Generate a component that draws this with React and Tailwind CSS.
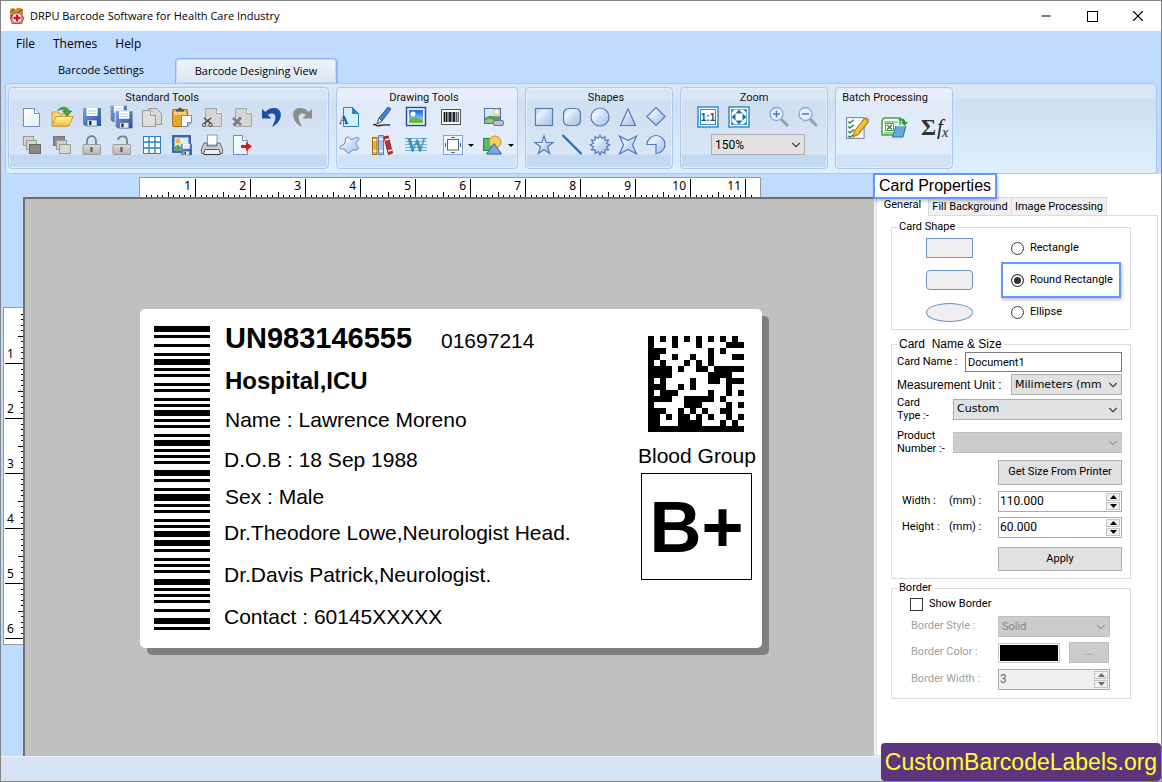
import { Minus, X, ChevronDown } from 'lucide-react';

const BARS = [
  [0, 6], [9, 3], [18, 3], [27, 3], [33, 6], [42, 3], [48, 3], [57, 3], [63, 3], [72, 3],
  [78, 3], [84, 6], [93, 3], [99, 3], [108, 3], [114, 6], [123, 3], [129, 3], [135, 3], [144, 6],
  [153, 3], [162, 3], [168, 7], [178, 3], [184, 3], [193, 3], [199, 3], [205, 6], [214, 6], [223, 3],
  [232, 3], [238, 3], [244, 3], [253, 6], [262, 3], [268, 3], [274, 3], [283, 3], [292, 6], [301, 3],
];

const MATRIX = [
  '1010101010101010',
  '1000100010000111',
  '1110000000101000',
  '1100100100100011',
  '1010001010100000',
  '1111010011011111',
  '1111000000111100',
  '1010000100110111',
  '1110010100000100',
  '1011100000100101',
  '1111001111101000',
  '1000001110000101',
  '1110010101001100',
  '1101011010100101',
  '1100011110001010',
  '1111111111111111',
];

function Icon({ size = 22, children }) {
  return (
    <svg width={size} height={size} viewBox="0 0 22 22" fill="none" aria-hidden="true" className="shrink-0">
      {children}
    </svg>
  );
}

function Gradients() {
  return (
    <svg width="0" height="0" className="absolute" aria-hidden="true">
      <defs>
        <linearGradient id="shape" x1="0" y1="0" x2="1" y2="1">
          <stop offset="0" stopColor="#b9cff0" />
          <stop offset="0.3" stopColor="#eaf2fc" />
          <stop offset="0.55" stopColor="#c6daf3" />
          <stop offset="1" stopColor="#a9c6ec" />
        </linearGradient>
        <linearGradient id="sheet" x1="0" y1="0" x2="1" y2="1">
          <stop offset="0" stopColor="#ffffff" />
          <stop offset="1" stopColor="#e3eefb" />
        </linearGradient>
        <linearGradient id="grey" x1="0" y1="0" x2="0" y2="1">
          <stop offset="0" stopColor="#dcdcdc" />
          <stop offset="1" stopColor="#b4b4b4" />
        </linearGradient>
        <linearGradient id="folder" x1="0" y1="0" x2="0" y2="1">
          <stop offset="0" stopColor="#fff3ae" />
          <stop offset="1" stopColor="#efbf3f" />
        </linearGradient>
        <linearGradient id="floppy" x1="0" y1="0" x2="1" y2="1">
          <stop offset="0" stopColor="#7fa3dc" />
          <stop offset="1" stopColor="#24509c" />
        </linearGradient>
        <linearGradient id="sky" x1="0" y1="0" x2="0" y2="1">
          <stop offset="0" stopColor="#1268e0" />
          <stop offset="1" stopColor="#bfe6fb" />
        </linearGradient>
      </defs>
    </svg>
  );
}

function Page({ x = 0, fill = 'url(#sheet)', stroke = '#6d8fc2' }) {
  return (
    <g transform={`translate(${x} 0)`}>
      <path d="M2.5 2.5h11l5 5v13h-16z" fill={fill} stroke={stroke} />
      <path d="M13.5 2.5v5h5" fill="#f4f8fd" stroke={stroke} />
    </g>
  );
}

function Disk() {
  return (
    <>
      <path d="M2 2h18v18H4l-2-2z" fill="url(#floppy)" />
      <path d="M5.5 2h11v8h-11z" fill="#fff" />
      <path d="M7 5h8M7 7.5h8" stroke="#b9c7de" />
      <path d="M6 14h10v6H6z" fill="#e8ecf2" stroke="#3b5d97" strokeWidth="0.6" />
      <path d="M8 15h2.5v4H8z" fill="#333" />
    </>
  );
}

function NewIcon() {
  return <Icon><Page /></Icon>;
}

function OpenIcon() {
  return (
    <Icon>
      <path d="M1 6h6l2 2h8v12H1z" fill="#f7d675" stroke="#c99a2c" />
      <path d="M1 20l4-9.5h17L18 20z" fill="url(#folder)" stroke="#c99a2c" />
      <path d="M7 4.5C10 0 16.5 0 18 5h2.7l-4.5 5-4.5-5h2.6C13 2.8 10 2.6 7 4.5z" fill="#3fae3a" stroke="#1f7a22" strokeWidth="0.7" />
    </Icon>
  );
}

function SaveIcon() {
  return <Icon><Disk /></Icon>;
}

function SaveAllIcon() {
  return (
    <Icon size={24}>
      <g transform="translate(-1 -1) scale(.82)"><Disk /></g>
      <g transform="translate(3.5 4) scale(.86)">
        <path d="M1 1h20v20H1z" fill="#d5e2f3" />
        <Disk />
      </g>
    </Icon>
  );
}

function CopyIcon() {
  return (
    <Icon>
      <path d="M7.5 2.5h8l5 5v11h-13z" fill="#d6d6d6" stroke="#979797" />
      <path d="M1.5 4.5h8l5 5v11h-13z" fill="#dedede" stroke="#979797" />
      <path d="M9.5 4.5v5h5" stroke="#979797" fill="#eee" />
    </Icon>
  );
}

function PasteIcon() {
  return (
    <Icon>
      <rect x="1.5" y="3.5" width="15" height="17" rx="1" fill="#e9a52f" stroke="#a86d10" />
      <path d="M3 6h12v3H3z" fill="#f7cf72" />
      <path d="M5 5.5V3.5h2C7.3.8 10.7.8 11 3.5h2v2z" fill="#555" />
      <path d="M10.5 9.5h10v7l-4 4h-6z" fill="#fff" stroke="#6d8fc2" />
      <path d="M20.5 16.5h-4v4z" fill="#a9c6ec" stroke="#6d8fc2" />
    </Icon>
  );
}

function CutIcon() {
  return (
    <Icon>
      <Page fill="#d5d5d5" stroke="#a5a5a5" x={2} />
      <path d="M3 12l7 5.5M10 12l-6.5 5.5" stroke="#444" strokeWidth="1.3" />
      <circle cx="3" cy="18.8" r="1.7" stroke="#444" />
      <circle cx="9.5" cy="18.8" r="1.7" stroke="#444" />
    </Icon>
  );
}

function DeleteIcon() {
  return (
    <Icon>
      <Page fill="#d5d5d5" stroke="#a5a5a5" x={2} />
      <path d="M2 12l8 7M10 11.5L2.5 19.5" stroke="#7d7d7d" strokeWidth="2.8" />
    </Icon>
  );
}

function UndoIcon() {
  return (
    <Icon>
      <path d="M1 3v9.5h9.5L7 9c5-3.5 9.5-.5 6.5 6.5-.8 1.8-1.5 3.5-2.5 5.5C22 15.5 22.5 3 14 2 10 1.6 7 3.2 4.5 6z" fill="#1f50a6" />
    </Icon>
  );
}

function RedoIcon() {
  return (
    <Icon>
      <path d="M21 3v9.5h-9.5L15 9c-5-3.5-9.5-.5-6.5 6.5.8 1.8 1.5 3.5 2.5 5.5C0 15.5-.5 3 8 2c4-.4 7 1.2 9.5 4z" fill="#8d8d8d" />
    </Icon>
  );
}

function FrontIcon() {
  return (
    <Icon>
      <rect x="2.5" y="2.5" width="10" height="9" fill="#d4d4d4" stroke="#9a9a9a" />
      <rect x="5.5" y="6.5" width="10" height="9" fill="#d4d4d4" stroke="#9a9a9a" />
      <rect x="8.5" y="10.5" width="11" height="9" fill="#8a8a8a" stroke="#666" />
    </Icon>
  );
}

function BackIcon() {
  return (
    <Icon>
      <rect x="2.5" y="2.5" width="11" height="9" fill="#8a8a8a" stroke="#777" />
      <rect x="5.5" y="6.5" width="10" height="9" fill="#cfcfcf" stroke="#9a9a9a" />
      <rect x="8.5" y="10.5" width="11" height="9" fill="#d8d8d8" stroke="#9a9a9a" />
    </Icon>
  );
}

function LockIcon({ open }) {
  return (
    <Icon>
      <path d={open ? 'M7 6c1-5 9-5 9 .5V11' : 'M6 11V7c0-6.5 9-6.5 9 0v4'} stroke="#7f7f7f" strokeWidth="1.8" />
      <rect x="2" y="10.5" width="17.5" height="10" rx="1" fill="url(#grey)" stroke="#9b9b9b" />
      <path d="M9.5 13h2v5h-2z" fill="#555" />
    </Icon>
  );
}

function GridIcon() {
  return (
    <Icon>
      <rect x="2.5" y="2.5" width="17" height="17" fill="#fff" stroke="#2b86c0" />
      <path d="M8 2v18M14 2v18M2 8h18M2 14h18" stroke="#2b86c0" strokeWidth="1.4" />
    </Icon>
  );
}

function ExportImageIcon() {
  return (
    <Icon>
      <rect x="1" y="1" width="19" height="18" fill="#3a66a8" />
      <rect x="3.5" y="3.5" width="14" height="13" fill="#dcefff" />
      <circle cx="7" cy="7" r="2.5" fill="#f5b62c" />
      <path d="M3.5 16.5v-4l4-2 5 6z" fill="#56a64a" />
      <g transform="translate(8.5 8.5) scale(.62)"><Disk /></g>
    </Icon>
  );
}

function PrintIcon() {
  return (
    <Icon>
      <path d="M6.5 1h9.5v10H6.5z" fill="#fff" stroke="#7a9ecb" />
      <path d="M3 9h3v3h10V9h3l2.5 6v4.5H.5V15z" fill="#c9ced6" stroke="#666c76" />
      <path d="M4 15.5h14l1.5 5h-17z" fill="#eef1f5" stroke="#555" />
      <path d="M3.5 20.5h15" stroke="#333" />
    </Icon>
  );
}

function ExitIcon() {
  return (
    <Icon>
      <path d="M2.5 1.5h9l5 5v14h-14z" fill="url(#sheet)" stroke="#6d8fc2" />
      <path d="M11.5 1.5v5h5" fill="#fff" stroke="#6d8fc2" />
      <path d="M10 11h5V8l6 4.5-6 4.5v-3h-5z" fill="#dd1717" />
    </Icon>
  );
}

function TextIcon() {
  return (
    <Icon>
      <path d="M4.5 1.5h9l6 6v13h-15z" fill="#d5effa" stroke="#2a88b8" />
      <path d="M13.5 1.5v6h6z" fill="#2a88b8" stroke="#2a88b8" />
      <text x="0" y="18" fontFamily="Liberation Serif, serif" fontWeight="700" fontSize="13" fill="#164e84">A</text>
    </Icon>
  );
}

function PenIcon() {
  return (
    <Icon>
      <path d="M17 1l3 2-9 12-5 3 2-6z" fill="#3f86cf" stroke="#23446d" strokeWidth="0.8" />
      <path d="M8 12l3 3-5 3z" fill="#e9eef5" stroke="#333" strokeWidth="0.6" />
      <path d="M2 19c5-2 1 2 7 .5 4-1 6-.5 10-.5" stroke="#222" strokeWidth="1.3" />
    </Icon>
  );
}

function PictureIcon() {
  return (
    <Icon>
      <rect x="1.5" y="1.5" width="19" height="18" fill="#f4f4f4" stroke="#2c4f9b" strokeWidth="1.5" />
      <rect x="4" y="4" width="14" height="13" fill="url(#sky)" />
      <circle cx="8" cy="8" r="2.5" fill="#fff" />
      <path d="M4 14c4-4 9-2 14 0v3H4z" fill="#6ab43f" />
    </Icon>
  );
}

function BarcodeIcon() {
  return (
    <Icon>
      <rect x="1.5" y="3.5" width="19" height="15" fill="#fff" stroke="#555" />
      <path d="M4.5 6v10M10 6v10M14 6v10" stroke="#111" strokeWidth="1.8" />
      <path d="M6.5 6v10M8 6v10M12 6v10M16.2 6v10M18.2 6v10" stroke="#111" />
    </Icon>
  );
}

function WatermarkIcon() {
  return (
    <Icon>
      <rect x="2.5" y="2.5" width="16" height="15" fill="#d8ecf8" stroke="#3f73b0" />
      <circle cx="14.5" cy="6" r="3" fill="#fff3d8" stroke="#e6b57b" />
      <path d="M3 12c5-4 9-1 15-2v7H3z" fill="#5f9c58" />
      <path d="M3 14.5c5-3 8-1 12 2.5H3z" fill="#98c67f" />
      <rect x="11.5" y="14.5" width="10" height="5" rx="1.5" fill="#b8bfd3" stroke="#6b7489" />
    </Icon>
  );
}

function FreeformIcon() {
  return (
    <Icon>
      <path d="M8 3c2-1 3 3 5 2.500s5-3.500 6.500-1.500-3 4-2.500 6 3.500 3 2 5-4 .5-5.500 1-2 4-4.500 3-2-3.500-4-4-4 1-4-1.500 4-2 5-4.500-.5-5 2-6z" fill="url(#shape)" stroke="#5d80bf" />
    </Icon>
  );
}

function LibraryIcon() {
  return (
    <Icon>
      <path d="M1.5 3.5H6v17H1.5z" fill="#f2b035" stroke="#9c6a16" />
      <path d="M2 6h3.5M2 17h3.5" stroke="#fff" strokeWidth="1.5" />
      <path d="M7.5 1.5h5v19h-5z" fill="#a9c2e2" stroke="#5a7cab" />
      <path d="M8 5h4M8 17h4" stroke="#fff" strokeWidth="1.5" />
      <path d="M13 3l4-1L21.5 19l-4 1.5z" fill="#c8322d" stroke="#8b1c1c" />
      <path d="M14 6l4-1M17 17l4-1" stroke="#fff" strokeWidth="1.3" />
    </Icon>
  );
}

function WordArtIcon() {
  return (
    <Icon>
      <path d="M0 4.5h22M0 7.5h22M0 10.5h22M0 13.5h22M0 16.5h22" stroke="#6bb4d6" />
      <text x="1" y="18" fontFamily="Liberation Serif, serif" fontWeight="700" fontSize="20" fill="#3f93bd">W</text>
    </Icon>
  );
}

function FrameIcon() {
  return (
    <Icon>
      <rect x="1.5" y="1.5" width="19" height="19" fill="#eef6fe" stroke="#7da5da" />
      <rect x="5.5" y="5.5" width="11" height="10.5" fill="#fff" stroke="#567" />
      <path d="M9 3.5h4M9 18.5h4M3.5 9v4M18.5 9v4" stroke="#567" />
    </Icon>
  );
}

function ShapesIcon() {
  return (
    <Icon>
      <rect x="1.5" y="4.5" width="10" height="12" fill="#4fbf6a" stroke="#218a3e" />
      <circle cx="13" cy="8" r="6" fill="#f6cf63" stroke="#c98f1f" />
      <path d="M12 9.5l7.5 10.5h-15z" fill="#7ea6dc" stroke="#355e9b" />
    </Icon>
  );
}

const STAR12 = Array.from({ length: 24 }, (_, i) => {
  const r = i % 2 ? 6.8 : 9.8;
  const a = (i * Math.PI) / 12 - Math.PI / 2;
  return `${11 + r * Math.cos(a)},${11 + r * Math.sin(a)}`;
}).join(' ');

function Shape({ kind }) {
  const p = { fill: 'url(#shape)', stroke: '#5577bb', strokeWidth: 1.2 };
  return (
    <Icon>
      {kind === 'Square' && <rect x="2.5" y="2.5" width="17" height="17" {...p} />}
      {kind === 'Rounded square' && <rect x="2.5" y="2.5" width="17" height="17" rx="5" {...p} />}
      {kind === 'Circle' && <circle cx="11" cy="11" r="9" {...p} />}
      {kind === 'Triangle' && <path d="M11 3l7.5 16.5h-15z" {...p} />}
      {kind === 'Diamond' && <path d="M11 1.5l9 9-9 9-9-9z" {...p} />}
      {kind === 'Star' && <path d="M11 2l2.2 6.5H20l-5.5 4.2 2.2 6.8L11 15.5l-5.7 4 2.2-6.8L2 8.500h6.8z" {...p} />}
      {kind === 'Line' && <path d="M1.5 1l19 19" stroke="#1c6cb4" strokeWidth="2.2" />}
      {kind === 'Burst' && <polygon points={STAR12} {...p} />}
      {kind === 'Four point star' && <path d="M2.5 2l8.5 4.500L19.500 2 15.500 11l4 9-8.500-4.500L2.500 20l4-9z" {...p} />}
      {kind === 'Pie' && <path d="M2 10.5a9 9 0 1 1 9 9v-9z" {...p} />}
    </Icon>
  );
}

function ActualSizeIcon() {
  return (
    <Icon>
      <rect x="1" y="1" width="20" height="20" fill="#fff" stroke="#2f8dca" strokeWidth="1.5" />
      <rect x="3.5" y="3.5" width="15" height="15" stroke="#2f8dca" />
      <text x="11" y="15" textAnchor="middle" fontFamily="Liberation Sans, sans-serif" fontWeight="700" fontSize="10" fill="#1c4e80">1:1</text>
    </Icon>
  );
}

function FitIcon() {
  return (
    <Icon>
      <rect x="1" y="1" width="20" height="20" fill="#fff" stroke="#2f8dca" strokeWidth="1.5" />
      <rect x="3.5" y="3.5" width="15" height="15" stroke="#7db8de" />
      <path d="M11 3.5l3.5 4h-7zM11 18.5l3.5-4h-7zM3.5 11l4-3.5v7zM18.5 11l-4-3.5v7z" fill="#1d6fa8" />
      <path d="M3.5 3.5h3l-3 3zM18.5 3.5v3l-3-3zM3.5 18.5v-3l3 3zM18.5 18.5h-3l3-3z" fill="#1d6fa8" />
    </Icon>
  );
}

function MagnifierIcon({ plus }) {
  return (
    <Icon>
      <path d="M13 13l6 6" stroke="#9a9fa8" strokeWidth="3" strokeLinecap="round" />
      <circle cx="8.5" cy="8" r="6.5" fill="#e6f0fd" stroke="#86a6e0" strokeWidth="1.3" />
      <path d={plus ? 'M5 8h7M8.5 4.5v7' : 'M5 8h7'} stroke="#4a78c4" strokeWidth="1.5" />
    </Icon>
  );
}

function ChecklistIcon() {
  return (
    <Icon size={24}>
      <rect x="1.5" y="1.5" width="16" height="19" fill="#fff" stroke="#6e86ad" />
      <path d="M3 5l1.5 1.5L8 3.5M3 9.5L4.5 11 8 8M3 14l1.5 1.5L8 12.5M3 18l1.5 1.5L8 17" stroke="#2d8a34" strokeWidth="1.3" />
      <path d="M18 2l3.5 3L12 17l-4.5 2 1-5z" fill="#f4c33c" stroke="#a8761a" />
      <path d="M18 2l1.5-1 3 2.5-1 1.5z" fill="#e37d6b" />
    </Icon>
  );
}

function SpreadsheetIcon() {
  return (
    <svg width="28" height="24" viewBox="0 0 28 24" fill="none" aria-hidden="true" className="shrink-0">
      <path d="M1 4.5l2-2.5h16v17H1z" fill="#f2fbef" stroke="#46a04b" strokeWidth="1.5" />
      <path d="M3 6h14M3 17h9" stroke="#46a04b" />
      <path d="M4.5 7.5h8v7h-8z" fill="#fff" stroke="#46a04b" />
      <path d="M6 9l5 4.5M11 9l-5 4.5" stroke="#2c8131" strokeWidth="1.3" />
      <path d="M15 9.5h10l-3 11.5H11.5z" fill="#63a9dd" stroke="#2d6ea6" />
      <path d="M15 9.5h10" stroke="#d5ecfb" strokeWidth="1.5" />
      <path d="M17 4c4-3 7-1 7.5 2H27l-3.5 4L20 6h1.8C21 4.5 19 3.8 17 4z" fill="#2f9a34" />
    </svg>
  );
}

function FormulaIcon() {
  return (
    <svg width="30" height="24" viewBox="0 0 30 24" aria-hidden="true" className="shrink-0">
      <text x="0" y="19" fontFamily="Liberation Serif, serif" fontWeight="700" fontSize="23" fill="#333">Σ</text>
      <text x="16" y="18" fontFamily="Liberation Serif, serif" fontStyle="italic" fontSize="21" fill="#222">f</text>
      <text x="21" y="21" fontFamily="Liberation Serif, serif" fontStyle="italic" fontSize="14" fill="#222">x</text>
    </svg>
  );
}

function AppLogo() {
  return (
    <svg width="16" height="18" viewBox="0 0 16 18" fill="none" aria-hidden="true">
      <path d="M1 3c2-3 4-2 5 0 2-3 6-3 8 0v9H1z" fill="#c88a3a" />
      <path d="M1.5 5l4-3M9 6l5-4M2 9l5-3" stroke="#6b4a20" />
      <path d="M1 10h14l-2 6.5H3z" fill="#e9a99b" stroke="#a93a2c" strokeWidth="0.8" />
      <circle cx="8" cy="11" r="5" fill="#fff" stroke="#b5332b" strokeWidth="0.8" />
      <path d="M8 7.5v7M4.5 11h7" stroke="#e01010" strokeWidth="2.4" />
    </svg>
  );
}

function ToolButton({ label, className = '', arrow, children }) {
  return (
    <button type="button" title={label} aria-label={label} className={`flex h-7 items-center justify-center ${className}`}>
      {children}
      {arrow && <span className="ml-1 h-0 w-0 border-x-[3px] border-t-[3px] border-x-transparent border-t-black" />}
    </button>
  );
}

function Group({ title, titleClass = '', className = '', light, children }) {
  return (
    <section
      className={`h-[82px] shrink-0 rounded-[4px] border border-[#a9c9f0] shadow-[inset_0_0_0_1px_#e3eefb] ${
        light
          ? 'bg-[linear-gradient(#e6effb_0,#e6effb_12px,#dfe9f8_13px,#e4edfa_66px,#cfe1f8_67px,#d3e4f9_100%)]'
          : 'bg-[linear-gradient(#dae6f5_0,#dae6f5_12px,#cfdef1_13px,#d9e5f4_66px,#c1d8f2_67px,#c6dbf4_100%)]'
      } ${className}`}
    >
      <h2 className={`h-[15px] pt-[2px] text-center text-[11px] leading-[15px] text-[#111] ${titleClass}`}>{title}</h2>
      {children}
    </section>
  );
}

function Ribbon() {
  return (
    <div className="mx-1 flex gap-[7px] rounded-[4px] border border-[#a6c8f5] bg-[linear-gradient(#d9e6f5_0,#d9e6f5_14px,#cfdff2_16px,#def0fe_100%)] px-[2px] pt-[3px] pb-1">
      <Group title="Standard Tools" titleClass="pr-[13px]" className="w-[321px] px-2">
        <div className="grid w-[300px] grid-cols-10">
          <ToolButton label="New"><NewIcon /></ToolButton>
          <ToolButton label="Open"><OpenIcon /></ToolButton>
          <ToolButton label="Save"><SaveIcon /></ToolButton>
          <ToolButton label="Save all"><SaveAllIcon /></ToolButton>
          <ToolButton label="Copy"><CopyIcon /></ToolButton>
          <ToolButton label="Paste"><PasteIcon /></ToolButton>
          <ToolButton label="Cut"><CutIcon /></ToolButton>
          <ToolButton label="Delete"><DeleteIcon /></ToolButton>
          <ToolButton label="Undo"><UndoIcon /></ToolButton>
          <ToolButton label="Redo"><RedoIcon /></ToolButton>
          <ToolButton label="Bring to front"><FrontIcon /></ToolButton>
          <ToolButton label="Send to back"><BackIcon /></ToolButton>
          <ToolButton label="Lock"><LockIcon /></ToolButton>
          <ToolButton label="Unlock"><LockIcon open /></ToolButton>
          <ToolButton label="Grid"><GridIcon /></ToolButton>
          <ToolButton label="Export image"><ExportImageIcon /></ToolButton>
          <ToolButton label="Print"><PrintIcon /></ToolButton>
          <ToolButton label="Exit"><ExitIcon /></ToolButton>
        </div>
      </Group>

      <Group title="Drawing Tools" titleClass="pr-[6px]" className="w-[182px]" light>
        <div className="-ml-[3px] flex">
          <ToolButton label="Text" className="w-8"><TextIcon /></ToolButton>
          <ToolButton label="Pencil" className="w-8"><PenIcon /></ToolButton>
          <ToolButton label="Picture" className="w-9"><PictureIcon /></ToolButton>
          <ToolButton label="Barcode" className="w-9"><BarcodeIcon /></ToolButton>
          <ToolButton label="Watermark" className="w-12"><WatermarkIcon /></ToolButton>
        </div>
        <div className="-ml-[3px] flex">
          <ToolButton label="Freeform" className="w-8"><FreeformIcon /></ToolButton>
          <ToolButton label="Library" className="w-8"><LibraryIcon /></ToolButton>
          <ToolButton label="Word art" className="w-9"><WordArtIcon /></ToolButton>
          <ToolButton label="Frame" className="w-12" arrow><FrameIcon /></ToolButton>
          <ToolButton label="Shapes" className="w-8" arrow><ShapesIcon /></ToolButton>
        </div>
      </Group>

      <Group title="Shapes" titleClass="pl-[14px]" className="w-[148px] px-1">
        <div className="grid w-[140px] grid-cols-5">
          {['Square', 'Rounded square', 'Circle', 'Triangle', 'Diamond', 'Star', 'Line', 'Burst', 'Four point star', 'Pie'].map(kind => (
            <ToolButton key={kind} label={kind}><Shape kind={kind} /></ToolButton>
          ))}
        </div>
      </Group>

      <Group title="Zoom" className="w-[148px]">
        <div className="flex pl-[11px]">
          <ToolButton label="Actual size" className="w-[31px]"><ActualSizeIcon /></ToolButton>
          <ToolButton label="Fit to window" className="w-[31px]"><FitIcon /></ToolButton>
          <ToolButton label="Zoom in" className="ml-[9px] w-[31px]"><MagnifierIcon plus /></ToolButton>
          <ToolButton label="Zoom out" className="w-7"><MagnifierIcon /></ToolButton>
        </div>
        <div className="ml-[30px] mt-[3px] w-[94px]">
          <Select label="Zoom level" value="150%" className="w-full text-[12px]" />
        </div>
      </Group>

      <Group title="Batch Processing" titleClass="pr-[18px]" className="w-[118px]" light>
        <div className="flex gap-3 pt-[11px] pl-[9px]">
          <ToolButton label="Edit records"><ChecklistIcon /></ToolButton>
          <ToolButton label="Import spreadsheet"><SpreadsheetIcon /></ToolButton>
          <ToolButton label="Series"><FormulaIcon /></ToolButton>
        </div>
      </Group>
    </div>
  );
}

function Select({ id, label, value, className = '', disabled }) {
  return (
    <div className={`relative h-[21px] ${className}`}>
      <select
        id={id}
        aria-label={label}
        disabled={disabled}
        defaultValue={value}
        className="block h-full w-full appearance-none border border-[#adadad] bg-[#e1e1e1] pt-px pr-5 pl-[3px] disabled:border-[#bfbfbf] disabled:bg-[#cccccc] disabled:text-[#838383] disabled:opacity-100"
      >
        <option>{value}</option>
      </select>
      <ChevronDown
        size={14}
        strokeWidth={2}
        className={`pointer-events-none absolute top-[4px] right-[2px] ${disabled ? 'text-[#a0a0a0]' : 'text-[#444]'}`}
      />
    </div>
  );
}

function Spinner({ id, label, value, className = '', disabled }) {
  const step = 'flex h-[8px] w-full items-center justify-center border border-[#c4c4c4] bg-[#f0f0f0]';
  const arrow = disabled ? 'text-[#6d6d6d]' : 'text-black';
  return (
    <div className={`flex h-[21px] border border-[#a9abb3] p-px ${disabled ? 'bg-[#f0f0f0] text-[#6d6d6d]' : 'bg-white'} ${className}`}>
      <input id={id} aria-label={label} defaultValue={value} disabled={disabled} className="min-w-0 flex-1 bg-transparent pb-[2px] text-[12px] leading-4" />
      <div className="flex w-[14px] flex-col gap-px">
        <button type="button" aria-label={`Increase ${label}`} disabled={disabled} className={`${step} ${arrow}`}>
          <svg width="7" height="4" viewBox="0 0 7 4" fill="currentColor"><path d="M0 4l3.5-4L7 4z" /></svg>
        </button>
        <button type="button" aria-label={`Decrease ${label}`} disabled={disabled} className={`${step} ${arrow}`}>
          <svg width="7" height="4" viewBox="0 0 7 4" fill="currentColor"><path d="M0 0h7L3.5 4z" /></svg>
        </button>
      </div>
    </div>
  );
}

function HorizontalRuler() {
  const ticks = Array.from({ length: 111 }, (_, i) => i + 1);
  return (
    <svg width="622" height="20" className="ml-[116px] block" shapeRendering="crispEdges" role="img" aria-label="Horizontal ruler">
      <rect width="622" height="20" fill="#fff" />
      <path d="M.5 20V.5h621V20" fill="none" stroke="#9a9a9a" />
      {ticks.map(i => {
        const x = Math.round(1 + i * 5.5);
        const h = i % 10 === 0 ? 18 : i % 5 === 0 ? 5 : 2;
        return <rect key={i} x={x} y={20 - h} width="1" height={h} fill="#000" />;
      })}
      {ticks.filter(i => i % 10 === 0).map(i => (
        <text key={i} x={i * 5.5 - 3} y="13" textAnchor="end" fontSize="12" fontFamily="Noto Sans, sans-serif">{i / 10}</text>
      ))}
    </svg>
  );
}

function VerticalRuler() {
  const ticks = Array.from({ length: 60 }, (_, i) => i + 1);
  return (
    <svg width="20" height="338" className="mt-[133px] ml-[2px] block" shapeRendering="crispEdges" role="img" aria-label="Vertical ruler">
      <rect width="20" height="338" fill="#fff" />
      <path d="M20 .5H.5v337H20" fill="none" stroke="#9a9a9a" />
      {ticks.map(i => {
        const y = Math.round(1 + i * 5.5);
        const w = i % 10 === 0 ? 18 : i % 5 === 0 ? 5 : 2;
        return <rect key={i} x={20 - w} y={y} width={w} height="1" fill="#000" />;
      })}
      {ticks.filter(i => i % 10 === 0).map(i => (
        <text key={i} x="4" y={i * 5.5 - 4} fontSize="12" fontFamily="Noto Sans, sans-serif">{i / 10}</text>
      ))}
    </svg>
  );
}

function CardText({ className, children }) {
  return <p className={`absolute leading-6 whitespace-nowrap ${className}`}>{children}</p>;
}

// the label is a free canvas, so its items carry their own position
function LabelCard() {
  return (
    <div className="relative h-[339px] w-[622px] shrink-0 rounded-[5px] bg-white font-['Liberation_Sans',sans-serif] text-[21px] text-black shadow-[7px_7px_0_#808080]">
      <svg width="56" height="304" className="absolute top-[17px] left-[14px]" role="img" aria-label="Barcode">
        {BARS.map(([y, h]) => <rect key={y} y={y} width="56" height={h} />)}
      </svg>
      <CardText className="top-[17px] left-[85px] text-[29px] font-bold">UN983146555</CardText>
      <CardText className="top-[20px] left-[301px]">01697214</CardText>
      <CardText className="top-[60px] left-[85px] text-[24px] font-bold">Hospital,ICU</CardText>
      <CardText className="top-[99px] left-[85px]">Name : Lawrence Moreno</CardText>
      <CardText className="top-[139px] left-[84px]">D.O.B : 18 Sep 1988</CardText>
      <CardText className="top-[176px] left-[85px]">Sex : Male</CardText>
      <CardText className="top-[212px] left-[84px]">Dr.Theodore Lowe,Neurologist Head.</CardText>
      <CardText className="top-[254px] left-[84px]">Dr.Davis Patrick,Neurologist.</CardText>
      <CardText className="top-[296px] left-[84px]">Contact : 60145XXXXX</CardText>
      <svg width="96" height="96" viewBox="0 0 16 16" shapeRendering="crispEdges" className="absolute top-[27px] left-[508px]" role="img" aria-label="Data matrix">
        {MATRIX.map((row, y) => [...row].map((c, x) => c === '1' && <rect key={`${x}-${y}`} x={x} y={y} width="1" height="1" />))}
      </svg>
      <CardText className="top-[135px] left-[498px]">Blood Group</CardText>
      <div className="absolute top-[164px] left-[501px] flex h-[107px] w-[111px] items-center justify-center border border-black text-[72px] font-bold">
        B+
      </div>
    </div>
  );
}

function ShapeOption({ label, checked, className }) {
  return (
    <div className="flex h-8 items-center justify-between pr-[9px] pl-[34px]">
      <span className={`w-[47px] border border-[#6a94c8] bg-[#f0eef0] ${className}`} />
      <label
        className={`flex h-9 w-[120px] items-center gap-[6px] border-2 pl-2 ${
          checked ? 'border-[#6699ff] shadow-[1px_2px_3px_rgba(0,0,0,0.25)]' : 'border-transparent'
        }`}
      >
        <input
          type="radio"
          name="shape"
          defaultChecked={checked}
          className="size-[13px] appearance-none rounded-full border border-[#333] bg-white checked:bg-[#333] checked:shadow-[inset_0_0_0_2px_white]"
        />
        {label}
      </label>
    </div>
  );
}

function FieldSet({ legend, legendClass = '', className = '', children }) {
  return (
    <fieldset className={`mr-[26px] ml-[14px] min-w-0 border border-[#dcdcdc] ${className}`}>
      <legend className={`ml-[5px] px-[2px] leading-[14px] whitespace-pre ${legendClass}`}>{legend}</legend>
      {children}
    </fieldset>
  );
}

const pushButton = 'border border-[#adadad] bg-[#e1e1e1] text-center';

function Properties() {
  return (
    <aside className="relative flex w-[285px] shrink-0 flex-col bg-white pt-[21px] text-[11px] text-black">
      <h1 className="absolute -top-px -left-[3px] z-10 h-[26px] border-2 border-[#6699ff] bg-white px-1 font-['Liberation_Sans',sans-serif] text-[16px] leading-[22px] shadow-[1px_2px_3px_rgba(0,0,0,0.25)]">
        Card Properties
      </h1>
      <div role="tablist" className="flex h-[20px] items-end">
        <button type="button" role="tab" aria-selected="true" className="h-5 w-[52px] border-l border-[#dcdcdc]">General</button>
        <button type="button" role="tab" aria-selected="false" className="h-[18px] w-[84px] border border-b-0 border-[#d9d9d9] bg-[#f0f0f0] pt-px">Fill Background</button>
        <button type="button" role="tab" aria-selected="false" className="h-[18px] w-[95px] border border-b-0 border-l-0 border-[#d9d9d9] bg-[#f0f0f0] pt-px">Image Processing</button>
      </div>
      <div className="mr-[3px] flex-1 border border-t-0 border-[#dcdcdc] bg-[linear-gradient(90deg,transparent_51px,#dcdcdc_51px)] bg-[length:100%_1px] bg-no-repeat pt-[5px]">
        <FieldSet legend="Card Shape">
          <div className="-mt-[2px] pb-px">
            <ShapeOption label="Rectangle" className="h-5" />
            <ShapeOption label="Round Rectangle" className="h-5 rounded-[4px]" checked />
            <ShapeOption label="Ellipse" className="h-[19px] rounded-[50%]" />
          </div>
        </FieldSet>

        <FieldSet legend="Card  Name & Size" legendClass="font-['Liberation_Sans',sans-serif] text-[12px]" className="mt-[7px]">
          <div className="flex flex-col items-end pt-px pr-2 pb-[7px] pl-[5px]">
            <div className="flex w-full items-center">
              <label htmlFor="name" className="w-[68px]">Card Name :</label>
              <input id="name" defaultValue="Document1" className="h-5 min-w-0 flex-1 border border-[#7a7a7a] px-[2px]" />
            </div>
            <div className="mt-[2px] flex w-full items-center font-['Liberation_Sans',sans-serif] text-[12px]">
              <label htmlFor="unit" className="w-[114px] whitespace-nowrap">Measurement Unit :</label>
              <Select id="unit" value="Milimeters (mm)" className="min-w-0 flex-1 font-['DejaVu_Sans',sans-serif] text-[11px]" />
            </div>
            <div className="mt-px flex w-full items-center">
              <label htmlFor="type" className="w-[56px] leading-[13px]">Card<br />Type :-</label>
              <Select id="type" value="Custom" className="flex-1 font-['DejaVu_Sans',sans-serif] text-[11px]" />
            </div>
            <div className="mt-[7px] flex w-full items-center">
              <label htmlFor="product" className="w-[56px] leading-[13px]">Product<br />Number :-</label>
              <Select id="product" value="" className="flex-1" disabled />
            </div>
            <button type="button" className={`mt-[5px] h-[25px] w-[124px] ${pushButton}`}>Get Size From Printer</button>
            <div className="mt-[6px] flex w-full items-center pl-[5px]">
              <label htmlFor="width" className="w-[47px]">Width :</label>
              <span className="flex-1">(mm) :</span>
              <Spinner id="width" label="Width" value="110.000" className="w-[124px]" />
            </div>
            <div className="mt-[5px] flex w-full items-center pl-[5px]">
              <label htmlFor="height" className="w-[47px]">Height :</label>
              <span className="flex-1">(mm) :</span>
              <Spinner id="height" label="Height" value="60.000" className="w-[124px]" />
            </div>
            <button type="button" className={`mt-[9px] h-6 w-[124px] ${pushButton}`}>Apply</button>
          </div>
        </FieldSet>

        <FieldSet legend="Border" className="mt-[2px]">
          <div className="px-[19px] pb-2 text-[#a0a0a0]">
            <label className="flex h-[18px] items-center gap-[6px] text-black">
              <input type="checkbox" className="-ml-px size-[13px] appearance-none border border-[#333] bg-white" />
              Show Border
            </label>
            <div className="mt-[3px] flex items-center">
              <label htmlFor="bstyle" className="w-[87px]">Border Style :</label>
              <Select id="bstyle" value="Solid" className="w-[112px]" disabled />
            </div>
            <div className="mt-[5px] flex items-center">
              <span className="w-[87px]">Border Color :</span>
              <span className="h-5 w-[62px] border border-[#c8c8c8] bg-black shadow-[inset_0_0_0_1px_white]" />
              <button type="button" disabled aria-label="Pick border color" className="ml-[9px] h-[21px] w-10 border border-[#bfbfbf] bg-[#cccccc] text-[#838383]">...</button>
            </div>
            <div className="mt-[6px] flex items-center">
              <label htmlFor="bwidth" className="w-[87px]">Border Width :</label>
              <Spinner id="bwidth" label="Border width" value="3" className="w-[112px]" disabled />
            </div>
          </div>
        </FieldSet>
      </div>
    </aside>
  );
}

export default function App() {
  return (
    <div className="relative flex min-h-screen flex-col border border-[#848484] bg-[#bfdbff] font-['Roboto',sans-serif]">
      <Gradients />
      <header className="flex h-[30px] items-center bg-white pl-2 font-['Open_Sans',sans-serif] text-[11px] text-black">
        <AppLogo />
        <span className="ml-[5px]">DRPU Barcode Software for Health Care Industry</span>
        <div className="ml-auto flex">
          <button type="button" aria-label="Minimize" className="flex w-[46px] items-center justify-center"><Minus size={14} strokeWidth={2} /></button>
          <button type="button" aria-label="Maximize" className="flex w-[46px] items-center justify-center"><span className="size-[11px] border border-black" /></button>
          <button type="button" aria-label="Close" className="flex w-[46px] items-center justify-center"><X size={18} strokeWidth={1.5} /></button>
        </div>
      </header>

      <nav className="flex h-[25px] items-center gap-[18px] pl-[15px] font-['Open_Sans',sans-serif] text-[12px]">
        <button type="button">File</button>
        <button type="button">Themes</button>
        <button type="button">Help</button>
      </nav>
      <div role="tablist" className="flex h-[27px] pt-[2px] pl-[26px] font-['Open_Sans',sans-serif] text-[11px]">
        <button type="button" role="tab" aria-selected="false" className="w-[148px]">Barcode Settings</button>
        <button type="button" role="tab" aria-selected="true" className="w-[162px] rounded-t-[4px] border border-b-0 border-[#8fb2ee] bg-[linear-gradient(#eef4fc,#dae6f5)] shadow-[inset_0_0_0_1px_#c9d5f7,1px_0_0_#9fb9ea]">
          Barcode Designing View
        </button>
      </div>
      <Ribbon />

      <main className="flex flex-1">
        <div className="w-[22px] shrink-0">
          <VerticalRuler />
        </div>
        <div className="flex min-w-0 flex-1 flex-col pt-[3px]">
          <HorizontalRuler />
          <div className="flex-1 overflow-hidden border-t-2 border-l-2 border-[#6e6e6e] bg-[#c0c0c0] pt-[110px] pl-[115px]">
            <LabelCard />
          </div>
        </div>
        <div className="w-[2px] shrink-0 bg-[#f0f0f0]" />
        <Properties />
      </main>

      <footer className="h-[25px] border-t border-[#eef5fd] bg-[#d7e4f5]" />
      <a
        href="#home"
        className="absolute right-0 bottom-0 flex h-[38px] w-[280px] items-center justify-center rounded-[4px] bg-[#5c357c] font-['Liberation_Sans',sans-serif] text-[23px] text-[#ffff33]"
      >
        CustomBarcodeLabels.org
      </a>
    </div>
  );
}
